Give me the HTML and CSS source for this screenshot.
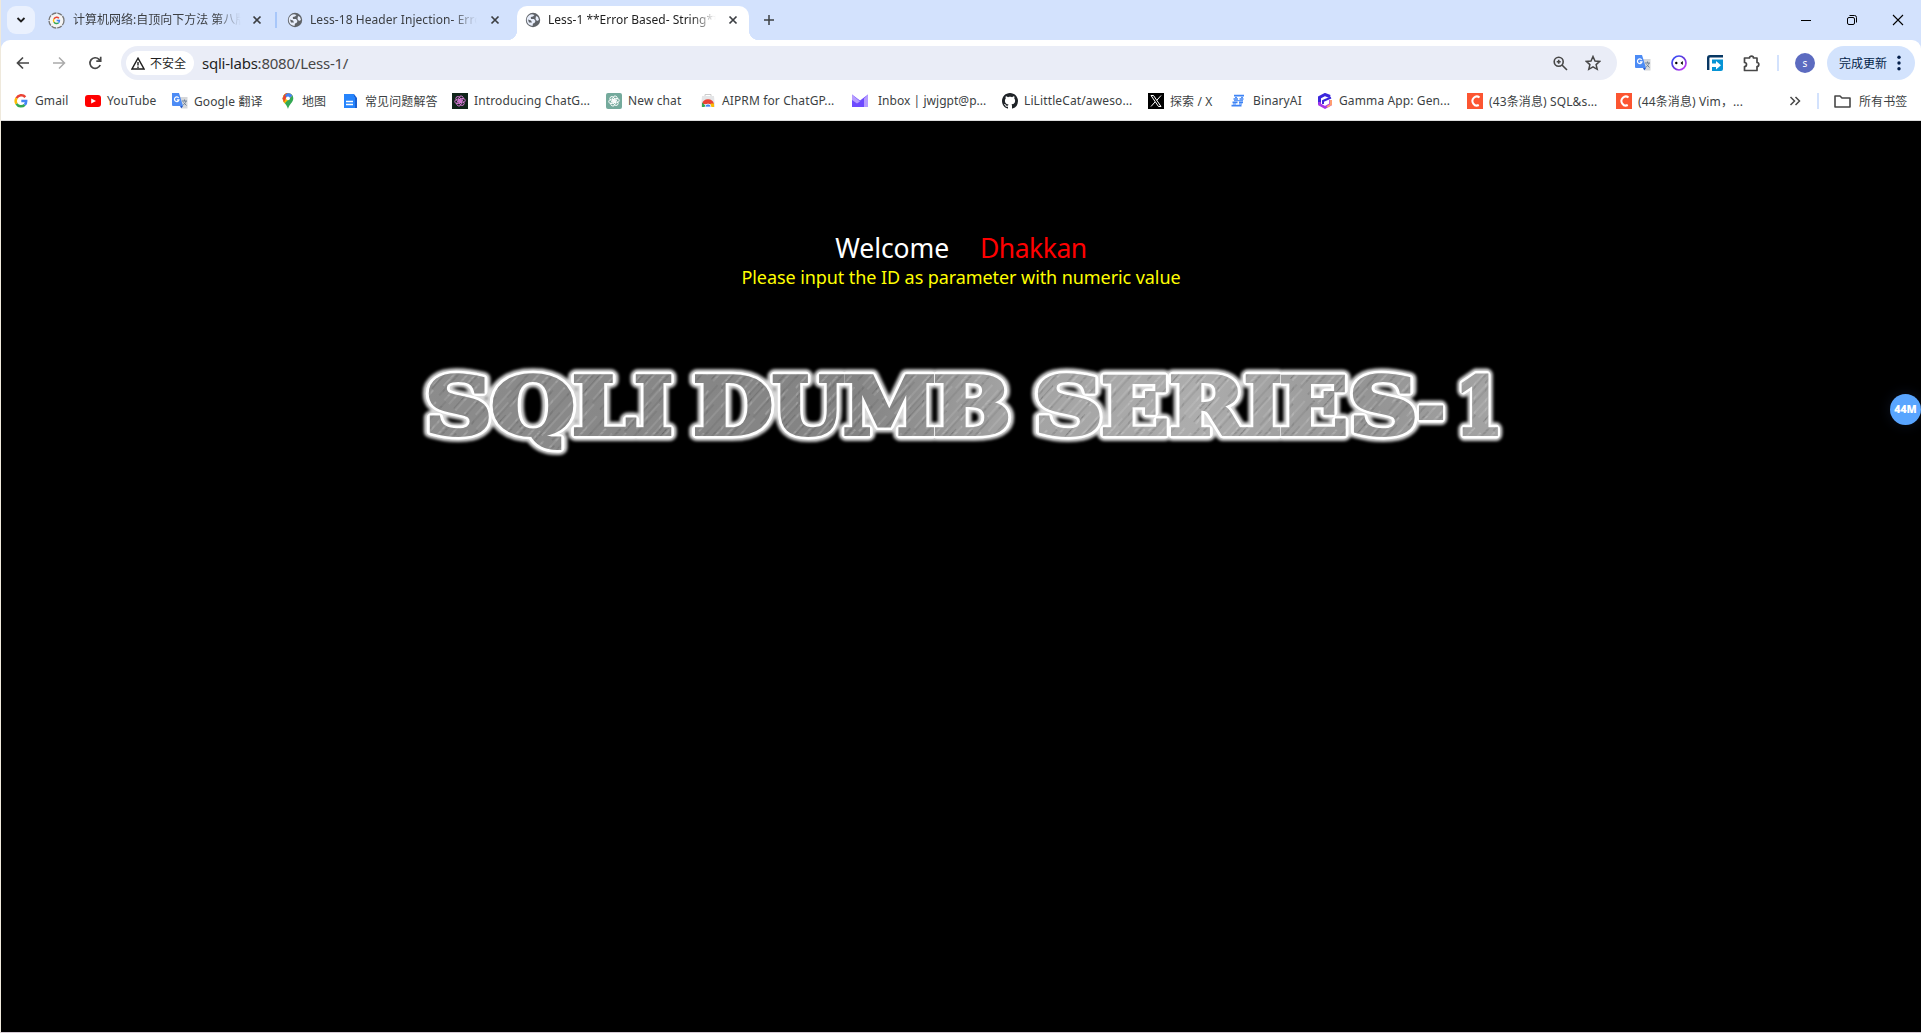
FILE: index.html
```html
<!DOCTYPE html>
<html lang="zh-CN">
<head>
<meta charset="utf-8">
<title>Less-1 **Error Based- String**</title>
<link rel="stylesheet" href="styles.css">
</head>
<body>
<svg class="defs" aria-hidden="true">
  <symbol id="globe" viewBox="0 0 16 16"><circle cx="8" cy="8" r="7.200" fill="#5f6368"/><path d="M1.800 8.500C1.500 5 4 2.500 7 2.200L9.500 3 8 4.500 5.800 5 6 7H9l1.500 2L9.500 11 8 11.500 7.500 14C4 13.500 2 11.500 1.800 8.500zM11 4l2 1 1 3-2 1-1.500-2z" fill="#e8eefb"/><path d="M3 7.500l3 1 1 2H4z" fill="#5f6368"/></symbol>
  <symbol id="close" viewBox="0 0 10 10"><path d="M1.500 1.500l7 7M8.500 1.500l-7 7" stroke="#3c3f43" stroke-width="1.700"/></symbol>
  <symbol id="google" viewBox="0 0 16 16"><g fill="none" stroke-width="2.500"><path d="M12.300 4.100A5.300 5.300 0 0 0 3.500 5.200" stroke="#ea4335"/><path d="M3.500 5.200a5.300 5.300 0 0 0 0 5.600" stroke="#fbbc05"/><path d="M3.500 10.800a5.300 5.300 0 0 0 8.200 1" stroke="#34a853"/><path d="M11.700 11.800A5 5 0 0 0 13.200 8H8.300" stroke="#4285f4"/></g></symbol>
  <symbol id="translate" viewBox="0 0 16 16"><path d="M7 4h8.500v11.500H10z" fill="#d5d7da"/><path d="M10 8h5M12.500 6.500V8M14 8c-.5 2-2 3.500-3.500 4.500M11.500 9.500l3 3" stroke="#6f8299" fill="none"/><path d="M0 0h7l4 13H1a1 1 0 0 1-1-1z" fill="#4c8bf5"/><path d="M8 13h3l-1.700 2.600z" fill="#2659c7"/><path d="M6.700 5A2.300 2.300 0 1 0 7 6.800H4.800" fill="none" stroke="#fff" stroke-width="1.200"/></symbol>
  <symbol id="knot" viewBox="0 0 16 16"><g fill="none" stroke="currentColor" stroke-width="1"><ellipse cx="8" cy="5.500" rx="2.500" ry="3.600" transform="rotate(20 8 8)"/><ellipse cx="8" cy="5.500" rx="2.500" ry="3.600" transform="rotate(80 8 8)"/><ellipse cx="8" cy="5.500" rx="2.500" ry="3.600" transform="rotate(140 8 8)"/><ellipse cx="8" cy="5.500" rx="2.500" ry="3.600" transform="rotate(200 8 8)"/><ellipse cx="8" cy="5.500" rx="2.500" ry="3.600" transform="rotate(260 8 8)"/><ellipse cx="8" cy="5.500" rx="2.500" ry="3.600" transform="rotate(320 8 8)"/></g></symbol>
  <symbol id="csdn" viewBox="0 0 16 16"><path d="M0 0h16v16H0z" fill="#fc5531"/><path d="M12.500 4.500A4.300 4.500 0 1 0 11.800 12" fill="none" stroke="#fff" stroke-width="2"/></symbol>
</svg>
<div class="window">
  <header class="tabs">
    <button class="tab-search"><svg width="12" height="12" viewBox="0 0 12 12"><path d="M2.500 4l3.500 3.500L9.500 4" fill="none" stroke="#1f1f1f" stroke-width="1.800"/></svg></button>
    <div class="tab first">
      <svg width="17" height="17" viewBox="0 0 17 17"><circle cx="8.500" cy="8.500" r="7.500" fill="#f4f4f4" stroke="#777" stroke-width="1.300" stroke-dasharray="5 1"/><use href="#google" x="4" y="4" width="9" height="9"/></svg>
      <span class="title">计算机网络:自顶向下方法 第八版</span>
      <svg width="10" height="10"><use href="#close"/></svg>
    </div>
    <div class="tab second">
      <svg width="16" height="16"><use href="#globe"/></svg>
      <span class="title">Less-18 Header Injection- Error</span>
      <svg width="10" height="10"><use href="#close"/></svg>
    </div>
    <div class="tab active">
      <svg width="16" height="16"><use href="#globe"/></svg>
      <span class="title">Less-1 **Error Based- String**</span>
      <svg width="10" height="10"><use href="#close"/></svg>
    </div>
    <svg class="plus" width="12" height="12" viewBox="0 0 12 12"><path d="M6 1v10M1 6h10" stroke="#3c4043" stroke-width="1.500"/></svg>
    <div class="controls">
      <svg width="12" height="12" viewBox="0 0 12 12"><path d="M1 6.500h10" stroke="#000"/></svg>
      <svg width="12" height="12" viewBox="0 0 12 12"><g fill="none" stroke="#000"><rect x="1.500" y="3.500" width="7" height="7" rx="1.500"/><path d="M3.500 1.500h5a2 2 0 0 1 2 2v5"/></g></svg>
      <svg width="12" height="12" viewBox="0 0 12 12"><path d="M1 1l10 10M11 1L1 11" stroke="#000" stroke-width="1.100"/></svg>
    </div>
  </header>
  <nav class="toolbar">
    <div class="nav">
      <svg width="14" height="14" viewBox="0 0 14 14"><path d="M13 7H2M7 1.500L1.500 7 7 12.500" fill="none" stroke="#474747" stroke-width="1.700"/></svg>
      <svg width="14" height="14" viewBox="0 0 14 14"><path d="M1 7h11M7 1.500L12.500 7 7 12.500" fill="none" stroke="#aaa" stroke-width="1.500"/></svg>
      <svg width="14" height="14" viewBox="0 0 14 14"><path d="M12.200 9A5.300 5.300 0 1 1 11 3.300L12.500 5M12.700 .8v4.400H8.300" fill="none" stroke="#474747" stroke-width="1.700"/></svg>
    </div>
    <div class="omnibox">
      <div class="chip"><svg width="14" height="13" viewBox="0 0 14 13"><path d="M7 1.200L13 12H1zM7 5v3.500M7 9.500V11" fill="none" stroke="#1f1f1f" stroke-width="1.400"/></svg><span>不安全</span></div>
      <span class="url"><b>sqli-labs</b>:8080/Less-1/</span>
      <svg class="zoomicon" width="15" height="15" viewBox="0 0 15 15"><g fill="none" stroke="#474747" stroke-width="1.600"><circle cx="5.700" cy="5.700" r="4.500"/><path d="M9 9l5 5M3.700 5.700h4M5.700 3.700v4"/></g></svg>
      <svg width="16" height="16" viewBox="0 0 16 16"><path d="M8 1.500l2 4.500 4.700.4-3.600 3.200 1.100 4.700L8 11.800l-4.200 2.500 1.100-4.700L1.300 6.400 6 6z" fill="none" stroke="#474747" stroke-width="1.500"/></svg>
    </div>
    <div class="extensions">
      <svg width="16" height="16"><use href="#translate"/></svg>
      <svg width="16" height="16" viewBox="0 0 16 16"><defs><linearGradient id="ring" y2="1"><stop stop-color="#3152ff"/><stop offset=".5" stop-color="#6337d8"/><stop offset="1" stop-color="#d83cff"/></linearGradient></defs><circle cx="8" cy="8" r="7" fill="#fff" stroke="url(#ring)" stroke-width="1.700"/><circle cx="5.300" cy="8" r="1.200"/><path d="M11.800 6L9.500 8l2.300 2z"/></svg>
      <svg width="16" height="16" viewBox="0 0 16 16"><path d="M1.200 15V3a1.800 1.800 0 0 1 1.800-1.800h13" fill="none" stroke="#073763" stroke-width="2.400"/><path d="M5 4.500h11V14a2 2 0 0 1-2 2H5z" fill="#0694d5"/><path d="M5 8.500h4V6l5 4.200-5 4.300V12H5z" fill="#fff"/></svg>
      <svg width="17" height="17" viewBox="0 0 17 17"><path d="M1.500 3H6.500a2 1.800 0 0 1 4 0H14v4.500a1.800 2 0 0 1 0 4V15.500H1.500V11.500a2 2 0 0 0 0-4z" fill="none" stroke="#474747" stroke-width="1.700" stroke-linejoin="round"/></svg>
      <i class="divider"></i>
      <span class="avatar">s</span>
    </div>
    <div class="update"><span>完成更新</span><svg width="4" height="16" viewBox="0 0 4 16"><g fill="#041e49"><circle cx="2" cy="2.300" r="1.700"/><circle cx="2" cy="8" r="1.700"/><circle cx="2" cy="13.700" r="1.700"/></g></svg></div>
  </nav>
  <nav class="bookmarks">
    <a><svg width="16" height="16"><use href="#google"/></svg><span>Gmail</span></a>
    <a><svg width="16" height="16" viewBox="0 0 16 16"><rect y="2" width="16" height="12" rx="3" fill="#f00"/><path d="M6.200 5.500L11 8l-4.800 2.500z" fill="#fff"/></svg><span>YouTube</span></a>
    <a><svg width="16" height="16"><use href="#translate"/></svg><span>Google 翻译</span></a>
    <a><svg width="16" height="16" viewBox="0 0 16 16"><path d="M8 0a5.300 5.300 0 0 0-5.300 5.300c0 4.500 4 5.500 5.300 10.700 1.300-5.200 5.300-6.200 5.300-10.700A5.300 5.300 0 0 0 8 0z" fill="#34a853"/><path d="M8 0a5.300 5.300 0 0 1 4.500 2.500L4.500 10.500C3.500 9 2.700 7.800 2.700 5.300A5.300 5.300 0 0 1 8 0z" fill="#fbbc04"/><path d="M8 0L4 9.500 2.700 5.300 4 2a5 5 0 0 1 4-2z" fill="#ea4335"/><path d="M8 0a5.300 5.300 0 0 1 4.500 2.500L8 7 5 2z" fill="#4285f4"/><circle cx="8" cy="5.300" r="1.900" fill="#fff"/></svg><span>地图</span></a>
    <a><svg width="16" height="16" viewBox="0 0 16 16"><path d="M1 1h10l3 4v10H1z" fill="#1a5fd0"/><path d="M1 1h10v3h1v11H1z" fill="#2684fc"/><path d="M3 8.500h7M3 11.500h7" stroke="#fff" stroke-width="1.300"/></svg><span>常见问题解答</span></a>
    <a><svg class="knot-dark" width="16" height="16"><use href="#knot" x="1" y="1" width="14" height="14"/></svg><span>Introducing ChatG...</span></a>
    <a><svg class="knot-green" width="16" height="16"><use href="#knot" x="1" y="1" width="14" height="14"/></svg><span>New chat</span></a>
    <a><svg width="16" height="16" viewBox="0 0 16 16"><path d="M5 4V1.500h6V4" fill="none" stroke="#ccc"/><path d="M2 3h12l1 11H1z" fill="#e4e5e7"/><path d="M2 11a6.200 6.200 0 0 1 12 0z" fill="#ea4335"/><path d="M2 14V9.500L7 14z" fill="#34a853"/><path d="M9 14l2-3.500h3V14z" fill="#fbbc04"/><path d="M5 14a3 3 0 0 1 6 0z" fill="#4285f4" stroke="#fff" stroke-width=".7"/></svg><span>AIPRM for ChatGP...</span></a>
    <a class="inbox"><svg width="16" height="16" viewBox="0 0 16 16"><path d="M0 1.500l8 6 8-6V14H0z" fill="#6d4aff"/><path d="M0 1.500l8 7-3 2L0 7zM16 1.500V14h-4V5.500z" fill="#b69cff"/></svg><span>Inbox | jwjgpt@p...</span></a>
    <a><svg width="16" height="16" viewBox="0 0 16 16"><path fill="#1f2328" d="M8 0C3.580 0 0 3.580 0 8c0 3.540 2.290 6.530 5.470 7.590.4.070.55-.17.55-.38 0-.19-.01-.82-.01-1.490-2.010.37-2.530-.49-2.690-.94-.09-.23-.48-.94-.82-1.130-.28-.15-.68-.52-.01-.53.63-.01 1.080.58 1.230.82.72 1.210 1.870.87 2.330.66.070-.52.28-.87.51-1.070-1.780-.2-3.640-.89-3.640-3.950 0-.87.31-1.590.82-2.150-.08-.2-.36-1.020.08-2.120 0 0 .67-.21 2.200.82.64-.18 1.320-.27 2-.27s1.360.09 2 .27c1.530-1.040 2.200-.82 2.200-.82.44 1.100.16 1.920.08 2.120.51.56.82 1.270.82 2.150 0 3.070-1.870 3.750-3.650 3.950.29.25.54.73.54 1.480 0 1.070-.01 1.930-.01 2.200 0 .21.15.46.55.38A8 8 0 0 0 16 8c0-4.420-3.580-8-8-8z"/></svg><span>LiLittleCat/aweso...</span></a>
    <a><svg width="16" height="16" viewBox="0 0 16 16"><path d="M0 0h16v16H0z"/><path d="M3 2.500h2.500l7.500 11h-2.500zM13 2.500L8.800 7.300M7 9L3 13.500" fill="none" stroke="#fff"/></svg><span>探索 / X</span></a>
    <a><svg width="16" height="16" viewBox="0 0 16 16"><path d="M3 2.700h10M2.500 6h4.500M8.500 6h4M1.500 9.300h5M8 9.300h4M.5 12.700h10" stroke="#3d83f5" stroke-width="1.700"/><path d="M4 4.400h2M10 4.400h2M3 7.700h9M2 11h3M8 11h3" stroke="#3d83f5" stroke-width="1"/></svg><span>BinaryAI</span></a>
    <a><svg width="16" height="16" viewBox="0 0 16 16"><path d="M13 3.500L8 1.500 2.500 4.500v7" fill="none" stroke="#3b27dc" stroke-width="3"/><path d="M2.500 9v2.500L8 14.500l5.500-3V7" fill="none" stroke="#a836e8" stroke-width="2.600"/><path d="M14 7v4.500L10 14" fill="none" stroke="#ff9c70" stroke-width="2"/><path d="M6 11V8l8-3.500" fill="none" stroke="#3b27dc" stroke-width="2"/></svg><span>Gamma App: Gen...</span></a>
    <a><svg width="16" height="16"><use href="#csdn"/></svg><span>(43条消息) SQL&amp;s...</span></a>
    <a><svg width="16" height="16"><use href="#csdn"/></svg><span>(44条消息) Vim，...</span></a>
    <a><svg width="12" height="10" viewBox="0 0 12 10"><path d="M1.500 1l4 4-4 4M6.500 1l4 4-4 4" fill="none" stroke="#474747" stroke-width="1.500"/></svg></a>
    <i class="divider"></i>
    <a class="all"><svg width="17" height="14" viewBox="0 0 17 14"><path d="M1 2h5l2 2h8v9H1z" fill="none" stroke="#474747" stroke-width="1.600" stroke-linejoin="round"/></svg><span>所有书签</span></a>
  </nav>
  <main class="page">
    <h1 class="welcome"><span>Welcome</span><span class="name">Dhakkan</span></h1>
    <p class="hint">Please input the ID as parameter with numeric value</p>
    <svg class="logo" width="1100" height="110" viewBox="411 355 1100 110">
      <defs>
        <linearGradient id="steel" gradientUnits="userSpaceOnUse" x1="420" y1="0" x2="1500" y2="0"><stop stop-color="#8c8c8c"/><stop offset=".4" stop-color="#838383"/><stop offset=".54" stop-color="#a2a2a2"/><stop offset=".72" stop-color="#adadad"/><stop offset=".88" stop-color="#949494"/><stop offset="1" stop-color="#a4a4a4"/></linearGradient>
        <pattern id="brush" width="97" height="43" patternUnits="userSpaceOnUse" patternTransform="rotate(-48)"><path d="M0 2h41M39 6h48M0 11h36M50 14h37M3 20h56M60 24h37M10 29h34M50 34h40M0 39h52" stroke="#fff" stroke-width=".9" opacity=".22"/><path d="M14 4h54M0 8.500h30M42 17h55M0 22h40M30 27h50M0 32h37M44 41h53" stroke="#222" stroke-width="1.100" opacity=".16"/></pattern>
        <filter id="blur" x="-5%" y="-30%" width="110%" height="160%"><feGaussianBlur stdDeviation="1.700"/></filter>
        <g id="letters" class="letters">
          <text x="425" y="434" textLength="67" lengthAdjust="spacingAndGlyphs">S</text>
          <text x="491" y="434" textLength="84" lengthAdjust="spacingAndGlyphs">Q</text>
          <text x="572" y="434" textLength="64" lengthAdjust="spacingAndGlyphs">L</text>
          <text x="634" y="434" textLength="39" lengthAdjust="spacingAndGlyphs">I</text>
          <text x="693" y="434" textLength="80" lengthAdjust="spacingAndGlyphs">D</text>
          <text x="772" y="434" textLength="72" lengthAdjust="spacingAndGlyphs">U</text>
          <text x="843" y="434" textLength="93" lengthAdjust="spacingAndGlyphs">M</text>
          <text x="933" y="434" textLength="78" lengthAdjust="spacingAndGlyphs">B</text>
          <text x="1034" y="434" textLength="69" lengthAdjust="spacingAndGlyphs">S</text>
          <text x="1101" y="434" textLength="68" lengthAdjust="spacingAndGlyphs">E</text>
          <text x="1169" y="434" textLength="76" lengthAdjust="spacingAndGlyphs">R</text>
          <text x="1244" y="434" textLength="38" lengthAdjust="spacingAndGlyphs">I</text>
          <text x="1279" y="434" textLength="69" lengthAdjust="spacingAndGlyphs">E</text>
          <text x="1349" y="434" textLength="69" lengthAdjust="spacingAndGlyphs">S</text>
          <text x="1417" y="434" textLength="28" lengthAdjust="spacingAndGlyphs">-</text>
          <text x="1455" y="434" textLength="48" lengthAdjust="spacingAndGlyphs">1</text>
        </g>
      </defs>
      <use href="#letters" class="glow"/>
      <use href="#letters" class="rim"/>
      <use href="#letters" class="metal"/>
      <use href="#letters" class="scratches"/>
    </svg>
    <div class="badge">44M</div>
  </main>
</div>
</body>
</html>
```
FILE: styles.css
```css
* { box-sizing: border-box; }
body { margin: 0; background: #000; font: 12px "Noto Sans", "Noto Sans CJK SC", sans-serif; color: #3c3f43; overflow: hidden; }
svg { display: block; flex: none; }
.defs { position: absolute; width: 0; height: 0; }
.window { height: 1033px; display: flex; flex-direction: column; border-left: 1px solid #efe9dc; border-bottom: 1px solid #d3c9d3; background: #d3e2fd; }
.tabs { height: 40px; flex: none; display: flex; align-items: center; padding-left: 6px; }
.tab-search { width: 28px; height: 28px; border: 0; padding: 0; border-radius: 9px; background: #eaf1fe; display: grid; place-items: center; margin-right: 13px; }
.tab { display: flex; align-items: center; height: 34px; font-size: 12px; }
.title { overflow: hidden; white-space: nowrap; line-height: 20px; mask-image: linear-gradient(90deg, #000 85%, transparent); }
.first { width: 228px; }
.first .title { width: 168px; margin: 0 11px 0 8px; }
.second { width: 241px; padding-left: 11px; position: relative; }
.second::before { content: ""; width: 2px; height: 16px; background: #a8c7fa; position: absolute; left: -1px; top: 9px; }
.second .title { width: 167px; margin: 0 13px 0 7px; letter-spacing: .06px; }
.active { position: relative; width: 232px; align-self: flex-end; padding: 0 0 6px 8px; background: #fff; border-radius: 10px 10px 0 0; color: #1f1f1f; }
.active .title { width: 168px; margin: 0 12px 0 7px; }
.active::before, .active::after { content: ""; position: absolute; bottom: 0; width: 10px; height: 10px; }
.active::before { left: -10px; background: radial-gradient(circle at 0 0, transparent 10px, #fff 10.500px); }
.active::after { right: -10px; background: radial-gradient(circle at 100% 0, transparent 10px, #fff 10.500px); }
.plus { margin-left: 14px; }
.controls { margin-left: auto; display: flex; gap: 34px; padding-right: 17px; }
.toolbar { height: 46px; flex: none; display: flex; align-items: center; background: #fff; border-radius: 9px 9px 0 0; padding: 0 6px 0 15px; }
.nav { display: flex; gap: 22px; width: 105px; }
.omnibox { height: 34px; width: 1496px; border-radius: 17px; background: #eaedf7; display: flex; align-items: center; padding: 0 16px 0 5px; }
.chip { height: 24px; width: 68px; border-radius: 12px; background: #fff; display: flex; align-items: center; gap: 5px; padding-left: 5px; color: #1f1f1f; white-space: nowrap; }
.url { font-size: 15px; margin-left: 8px; padding-bottom: 1px; color: #474747; letter-spacing: -.23px; }
.url b { font-weight: 400; color: #1f1f1f; }
.zoomicon { margin: 0 17px 0 auto; }
.extensions { display: flex; align-items: center; margin-left: 18px; gap: 20px; }
.divider { width: 2px; height: 16px; background: #d3e2fd; }
.extensions .divider { margin-left: -3px; margin-right: -4px; }
.avatar { width: 20px; height: 20px; border-radius: 50%; background: #5c6bc0; color: #fff; display: grid; place-items: center; font-size: 10px; line-height: 1; }
.update { margin-left: auto; width: 88px; height: 34px; border-radius: 17px; background: #d3e3fd; color: #041e49; display: flex; align-items: center; padding-left: 12px; gap: 10px; white-space: nowrap; }
.bookmarks { height: 35px; flex: none; background: #fff; border-bottom: 1px solid #ddd; display: grid; align-items: center; padding: 0 0 5px 12px; letter-spacing: .12px; grid-template-columns: 72px 87px 108px 63px 109px 154px 94px 152px 150px 146px 83px 86px 150px 149px 173px 28px 17px 1fr; }
.bookmarks a { display: flex; align-items: center; gap: 6px; white-space: nowrap; }
.bookmarks .inbox { gap: 10px; letter-spacing: .04px; }
.bookmarks .all { gap: 8px; }
.knot-dark { background: #10251a; color: #d77bd8; }
.knot-green { background: #74aa9c; color: #fff; border-radius: 2px; }
.page { flex: 1; background: #000; position: relative; display: flex; flex-direction: column; align-items: center; }
.welcome { margin: 108px 0 0; font-weight: 400; font-size: 26.500px; line-height: 39px; height: 36px; color: #fff; display: flex; gap: 31px; letter-spacing: -.1px; }
.name { color: #f00; letter-spacing: -.5px; }
.hint { margin: 0; font-size: 18px; line-height: 24px; color: #ff0; white-space: nowrap; letter-spacing: -.08px; }
.logo { margin-top: 66px; }
.letters { font: bold 79px "DejaVu Serif", serif; }
.glow { fill: #fff; stroke: #fff; stroke-width: 14px; stroke-linejoin: round; filter: url(#blur); opacity: .85; }
.rim { fill: #fff; stroke: #fff; stroke-width: 9px; stroke-linejoin: round; }
.metal { fill: url(#steel); stroke: url(#steel); stroke-width: 4px; }
.scratches { fill: url(#brush); stroke: url(#brush); stroke-width: 4px; }
.badge { position: absolute; right: 0; top: 273px; width: 31px; height: 31px; border-radius: 50%; background: #59a5ff; color: #fff; font: 800 10.500px/31px "Open Sans", sans-serif; text-align: center; box-shadow: 0 0 14px rgba(80, 120, 220, .15); }
```
